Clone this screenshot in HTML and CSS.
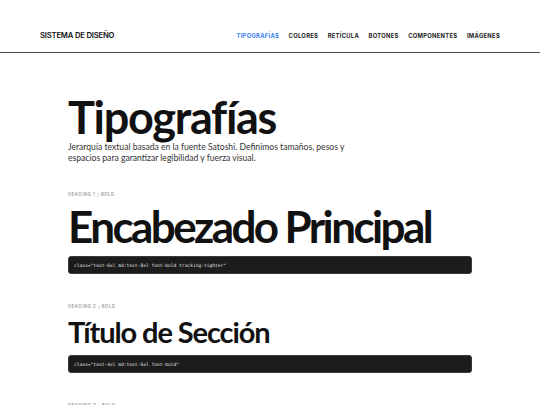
FILE: index.html
```html
<!DOCTYPE html>
<html lang="es">
<head>
<meta charset="utf-8">
<title>Sistema de Diseño</title>
<link rel="stylesheet" href="styles.css">
</head>
<body>
<header class="site-header">
  <div class="logo">SISTEMA DE DISEÑO</div>
  <nav class="nav">
    <a class="nav-link active" href="#">TIPOGRAFÍAS</a>
    <a class="nav-link" href="#">COLORES</a>
    <a class="nav-link" href="#">RETÍCULA</a>
    <a class="nav-link" href="#">BOTONES</a>
    <a class="nav-link" href="#">COMPONENTES</a>
    <a class="nav-link" href="#">IMÁGENES</a>
  </nav>
</header>
<main class="content">
  <section class="intro">
    <h1 class="page-title">Tipografías</h1>
    <p class="lead">Jerarquía textual basada en la fuente Satoshi. Definimos tamaños, pesos y espacios para garantizar legibilidad y fuerza visual.</p>
  </section>
  <section class="sample">
    <div class="label">HEADING 1 / BOLD</div>
    <div class="h1-sample">Encabezado Principal</div>
    <div class="code">class="text-6xl md:text-8xl font-bold tracking-tighter"</div>
  </section>
  <section class="sample">
    <div class="label">HEADING 2 / BOLD</div>
    <div class="h2-sample">Título de Sección</div>
    <div class="code">class="text-4xl md:text-6xl font-bold"</div>
  </section>
  <section class="sample">
    <div class="label">HEADING 3 / BOLD</div>
  </section>
</main>
</body>
</html>
```

FILE: styles.css
```css
* { box-sizing: border-box; }
html, body { margin: 0; padding: 0; }
body {
  background: #ffffff;
  color: #111111;
  font-family: Lato, "Noto Sans", sans-serif;
  width: 540px;
  height: 405px;
  overflow: hidden;
}
.site-header {
  height: 53px;
  padding: 31px 40px 0;
  display: flex;
  align-items: flex-start;
  justify-content: space-between;
  border-bottom: 1.5px solid #4a4a4a;
}
.logo {
  font-family: Inter, sans-serif;
  font-size: 7.7px;
  font-weight: 600;
  letter-spacing: -0.2px;
  line-height: 10px;
  color: #111;
}
.nav {
  display: flex;
  gap: 9.5px;
}
.nav-link {
  font-family: Inter, sans-serif;
  font-size: 5.8px;
  font-weight: 700;
  letter-spacing: 0.3px;
  line-height: 10px;
  color: #222;
  text-decoration: none;
}
.nav-link.active { color: #3b82f6; }
.content {
  width: 404px;
  margin: 0 auto;
  padding-top: 38px;
}
.page-title {
  margin: 0;
  font-size: 45px;
  font-weight: 700;
  letter-spacing: -1.3px;
  line-height: 52px;
}
.lead {
  margin: -1px 0 0;
  font-size: 8.6px;
  line-height: 11px;
  color: #333;
  width: 290px;
}
.sample { margin-top: 28px; }
.sample + .sample { margin-top: 30px; }
.label {
  font-family: Inter, sans-serif;
  font-size: 4.2px;
  font-weight: 600;
  letter-spacing: 0.6px;
  color: #9a9a9a;
  line-height: 6px;
}
.h1-sample {
  margin-top: 3px;
  font-size: 44px;
  font-weight: 700;
  letter-spacing: -2.6px;
  line-height: 50px;
}
.h2-sample {
  margin-top: 2px;
  font-size: 29px;
  font-weight: 700;
  letter-spacing: -1.1px;
  line-height: 40px;
}
.code {
  margin-top: 5px;
  background: #1c1c1c;
  border: 1px solid #3a3a3a;
  border-radius: 3px;
  height: 18px;
  padding: 0 5px;
  display: flex;
  align-items: center;
  font-family: "DejaVu Sans Mono", "Liberation Mono", monospace;
  font-size: 4.6px;
  color: #e6e6e6;
}
.sample + .sample .code { margin-top: 3px; }
```
